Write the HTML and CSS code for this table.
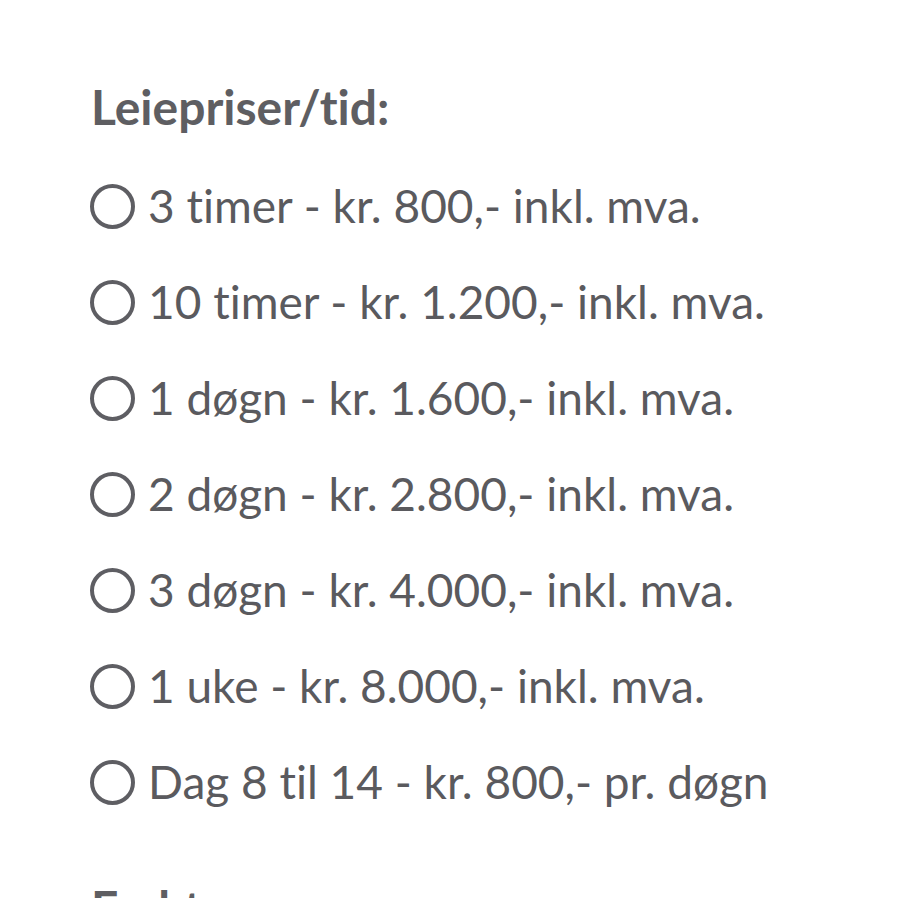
FILE: index.html
```html
<!DOCTYPE html>
<html lang="no">
<head>
<meta charset="utf-8">
<title>Leiepriser</title>
<link rel="stylesheet" href="styles.css">
</head>
<body>
<section class="prices">
  <h3 class="heading">Leiepriser/tid:</h3>
  <ul class="options">
    <li class="option"><span class="radio"></span><span class="label">3 timer - kr. 800,- inkl. mva.</span></li>
    <li class="option"><span class="radio"></span><span class="label">10 timer - kr. 1.200,- inkl. mva.</span></li>
    <li class="option"><span class="radio"></span><span class="label">1 døgn - kr. 1.600,- inkl. mva.</span></li>
    <li class="option"><span class="radio"></span><span class="label">2 døgn - kr. 2.800,- inkl. mva.</span></li>
    <li class="option"><span class="radio"></span><span class="label">3 døgn - kr. 4.000,- inkl. mva.</span></li>
    <li class="option"><span class="radio"></span><span class="label">1 uke - kr. 8.000,- inkl. mva.</span></li>
    <li class="option"><span class="radio"></span><span class="label">Dag 8 til 14 - kr. 800,- pr. døgn</span></li>
  </ul>
  <h3 class="heading next">Frakt:</h3>
</section>
</body>
</html>
```

FILE: styles.css
```css
html, body {
  margin: 0;
  padding: 0;
  background: #ffffff;
}
body {
  font-family: Lato, "Open Sans", sans-serif;
  color: #5a5a5e;
  font-variant-ligatures: none;
  font-feature-settings: "liga" 0, "dlig" 0;
  overflow: hidden;
  height: 898px;
}
.prices {
  padding: 79px 0 0 91px;
}
.heading {
  margin: 0;
  font-size: 48px;
  line-height: 56px;
  font-weight: 700;
  color: #5e5e62;
}
.options {
  list-style: none;
  margin: 43px 0 0 0;
  padding: 0;
  display: flex;
  flex-direction: column;
  gap: 40px;
}
.option {
  display: flex;
  align-items: center;
  gap: 13px;
  font-size: 46px;
  line-height: 56px;
  margin-left: -1px;
}
.radio {
  flex: none;
  width: 37px;
  height: 37px;
  border: 4px solid #5e5e63;
  border-radius: 50%;
}
.label {
  white-space: nowrap;
}
.next {
  margin-top: 70px;
}
```
